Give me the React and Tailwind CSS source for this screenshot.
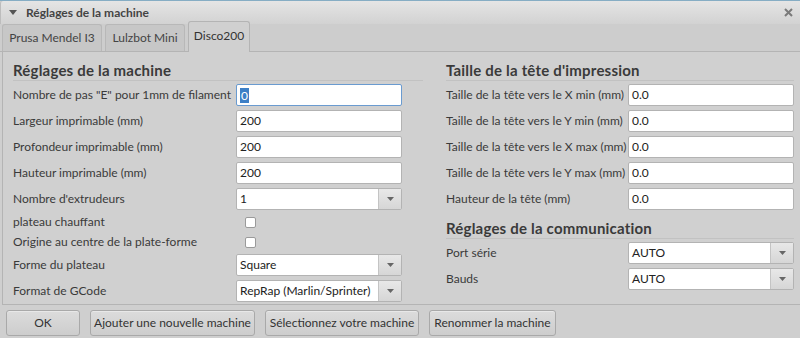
import React from "react";

const leftFields = [
  { label: 'Nombre de pas "E" pour 1mm de filament', value: "0", type: "input", focus: true },
  { label: "Largeur imprimable (mm)", value: "200", type: "input" },
  { label: "Profondeur imprimable (mm)", value: "200", type: "input" },
  { label: "Hauteur imprimable (mm)", value: "200", type: "input" },
  { label: "Nombre d'extrudeurs", value: "1", type: "combo" },
  { label: "plateau chauffant", type: "check" },
  { label: "Origine au centre de la plate-forme", type: "check" },
  { label: "Forme du plateau", value: "Square", type: "combo" },
  { label: "Format de GCode", value: "RepRap (Marlin/Sprinter)", type: "combo" },
];

const headFields = [
  "Taille de la tête vers le X min (mm)",
  "Taille de la tête vers le Y min (mm)",
  "Taille de la tête vers le X max (mm)",
  "Taille de la tête vers le Y max (mm)",
  "Hauteur de la tête (mm)",
];

function TextInput({ value, focus, width }) {
  return (
    <div
      className={`flex h-[22px] items-center rounded-[2px] border bg-white pl-[3px] text-[#222] ${
        focus ? "border-[#6a9bd0]" : "border-[#b3b3b3]"
      } ${width}`}
    >
      {focus ? (
        <span className="bg-[#3d7fc6] px-px leading-[15px] text-white">{value}</span>
      ) : (
        value
      )}
    </div>
  );
}

function Combo({ value, width }) {
  return (
    <div className={`flex h-[22px] rounded-[2px] border border-[#b3b3b3] bg-white ${width}`}>
      <div className="flex flex-1 items-center whitespace-nowrap pl-[3px] text-[#222]">{value}</div>
      <div className="flex w-[23px] items-center justify-center border-l border-[#c4c4c4] bg-gradient-to-b from-[#e8e8e8] to-[#d6d6d6]">
        <svg width="7" height="4" viewBox="0 0 7 4">
          <path d="M0 0h7L3.5 4z" fill="#666" />
        </svg>
      </div>
    </div>
  );
}

function Check() {
  return <div className="ml-[9px] h-[11px] w-[11px] rounded-[2px] border border-[#9a9a9a] bg-white" />;
}

function Heading({ children, className = "" }) {
  return (
    <div
      className={`h-[20px] border-b border-[#c2c2c2] text-[15px] font-bold leading-[18px] tracking-[0.2px] text-[#3a3a3a] ${className}`}
    >
      {children}
    </div>
  );
}

function Button({ children, width }) {
  return (
    <button
      type="button"
      className={`h-[26px] whitespace-nowrap rounded-[3px] border border-[#a9a9a9] bg-gradient-to-b from-[#dcdcdc] to-[#cdcdcd] text-[12px] text-[#333] shadow-[inset_0_1px_0_#e8e8e8] ${width}`}
    >
      {children}
    </button>
  );
}

export default function App() {
  return (
    <div className="flex h-[338px] w-[800px] flex-col overflow-hidden bg-[#cfcfcf] font-['Lato','Open_Sans',sans-serif] text-[12px] text-[#3a3a3a]">
      <div className="h-px bg-[#86adc4]" />
      <div className="flex h-[23px] items-center rounded-tl-[3px] border-l border-[#bdbdbd] bg-gradient-to-b from-[#e5e5e5] to-[#d2d2d2] pl-[8px] pr-[6px]">
        <svg width="8" height="5" viewBox="0 0 8 5" className="mr-[9px]">
          <path d="M0 0h8L4 5z" fill="#555" />
        </svg>
        <span className="font-bold text-[#444]">Réglages de la machine</span>
        <svg width="9" height="9" viewBox="0 0 9 9" className="ml-auto mr-[1px]">
          <path d="M1 1l7 7M8 1L1 8" stroke="#7a7a7a" strokeWidth="2" />
        </svg>
      </div>

      <div className="flex h-[28px] items-end gap-[3px] border-b border-[#b4b4b4] bg-[#cdcdcd] pl-[2px]">
        <div className="flex h-[27px] w-[100px] items-center justify-center rounded-t-[3px] border border-b-0 border-[#b8b8b8] bg-[#c7c7c7] text-[#444]">
          Prusa Mendel I3
        </div>
        <div className="flex h-[27px] w-[80px] items-center justify-center rounded-t-[3px] border border-b-0 border-[#b8b8b8] bg-[#c7c7c7] text-[#444]">
          Lulzbot Mini
        </div>
        <div className="-mb-px flex h-[31px] w-[62px] items-center justify-center rounded-t-[3px] border border-b-0 border-[#b4b4b4] bg-[#d0d0d0] pb-[3px] text-[#333]">
          Disco200
        </div>
      </div>

      <div className="ml-[2px] flex h-[253px] border-b border-l border-[#b4b4b4] bg-[#d0d0d0] pt-[9px]">
        <div className="ml-[10px] w-[410px]">
          <Heading>Réglages de la machine</Heading>
          <div className="mt-px flex flex-col">
            {leftFields.map((f) => (
              <div
                key={f.label}
                className={`flex items-center ${f.type === "check" ? "h-[20px]" : "h-[26px]"}`}
              >
                <div className="w-[223px] whitespace-nowrap">{f.label}</div>
                {f.type === "input" && <TextInput value={f.value} focus={f.focus} width="w-[166px]" />}
                {f.type === "combo" && <Combo value={f.value} width="w-[166px]" />}
                {f.type === "check" && <Check />}
              </div>
            ))}
          </div>
        </div>

        <div className="ml-[23px] flex-1 pr-[6px]">
          <Heading>Taille de la tête d'impression</Heading>
          <div className="mt-px flex flex-col">
            {headFields.map((label) => (
              <div key={label} className="flex h-[26px] items-center">
                <div className="w-[182px] whitespace-nowrap">{label}</div>
                <TextInput value="0.0" width="w-[166px]" />
              </div>
            ))}
          </div>
          <Heading className="mt-[7px]">Réglages de la communication</Heading>
          <div className="mt-px flex flex-col">
            <div className="flex h-[26px] items-center">
              <div className="w-[182px]">Port série</div>
              <Combo value="AUTO" width="w-[166px]" />
            </div>
            <div className="flex h-[26px] items-center">
              <div className="w-[182px]">Bauds</div>
              <Combo value="AUTO" width="w-[166px]" />
            </div>
          </div>
        </div>
      </div>

      <div className="flex gap-[10px] pl-[6px] pt-[5px]">
        <Button width="w-[74px]">OK</Button>
        <Button width="w-[165px]">Ajouter une nouvelle machine</Button>
        <Button width="w-[154px]">Sélectionnez votre machine</Button>
        <Button width="w-[127px]">Renommer la machine</Button>
      </div>
    </div>
  );
}
